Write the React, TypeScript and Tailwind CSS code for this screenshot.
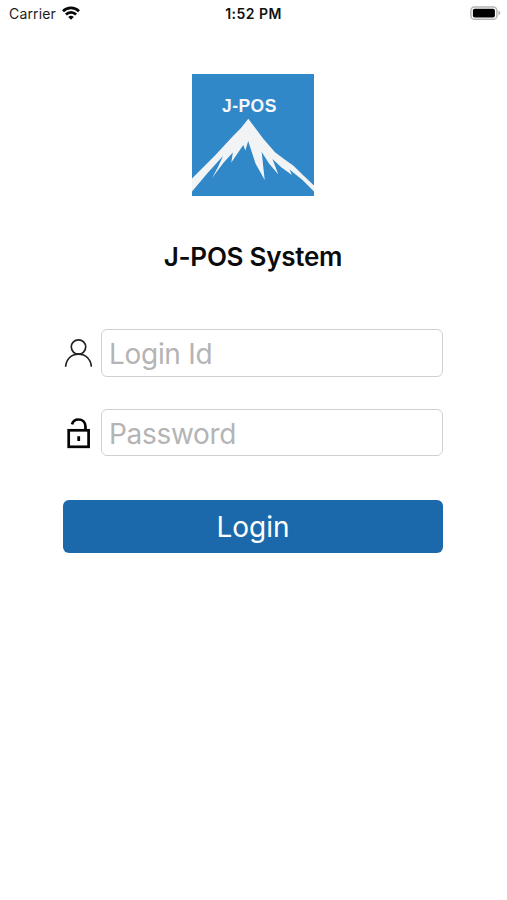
import type { ReactNode } from "react";

function StatusBar() {
  return (
    <header className="grid h-7 grid-cols-3 items-center pl-[9px] pr-[6px] text-[14px] leading-7 text-[#1c1c1c]">
      <div className="flex items-center gap-[6px]">
        <span className="tracking-[0.16px]">Carrier</span>
        <svg className="-mt-0.5" width="18" height="14" viewBox="0 0 18 14" fill="none" stroke="#080808" strokeWidth="2.7">
          <path d="M1 5.2a11.4 11.4 0 0 1 16 0" />
          <path d="M3.9 8.5a7.2 7.2 0 0 1 10.200 0" />
          <path d="M9 13.800 6.200 11a4 4 0 0 1 5.600 0Z" fill="#080808" stroke="none" />
        </svg>
      </div>
      <span className="-ml-[3px] text-center text-[14px] font-semibold tracking-[0.48px] text-[#111]">1:52 PM</span>
      <svg className="-mt-0.5 justify-self-end" width="31" height="16" viewBox="0 0 31 16">
        <rect x="0.9" y="1.9" width="26" height="12.4" rx="3.6" fill="#fff" stroke="#b5b5b5" strokeWidth="1.5" />
        <rect x="2.9" y="3.7" width="22" height="8.9" rx="1.8" fill="#000" />
        <path d="M28.4 5.6c2.5 1 2.5 4 0 5Z" fill="#b5b5b5" />
      </svg>
    </header>
  );
}

function Logo() {
  return (
    <div className="relative h-[122px] w-[122px] bg-[#3088c8]">
      <svg className="block" width="122" height="122" viewBox="0 0 122 122">
        <path
          fill="#f2f3f4"
          d="M56.300 44.800 64 55l7.500 10L83 78.300l9 6.700 9.500 6.700L112 102l10 9.500v6L110.500 106 97.500 95.500l2.500 5.500-10.500-7.500-9-8.500 5.800 15.500-9.300-11-7.300-11.500L72.700 106 63.500 89.500 56.200 67l-2.900 9.500-2-5.500-12 17.500 1.500-10-9.500 10.500L20 104l6-11 5-11-15 16.500L0 117.500v-13L23 81.500l18.300-19.800L49 54Z"
        />
      </svg>
      <span className="absolute left-[30px] top-[22px] font-['Liberation_Sans',Arial,sans-serif] text-[17.500px] font-bold leading-5 tracking-[0.45px] text-[#f6f8fc]">
        J-POS
      </span>
    </div>
  );
}

function UserIcon() {
  return (
    <svg width="28" height="30" viewBox="0 0 28 30" fill="none" stroke="#222" strokeWidth="1.700">
      <circle cx="14.500" cy="9" r="7.200" />
      <path d="M1.600 28.800C2.100 21.500 7 16.200 14.500 16.200s12.400 5.300 12.900 12.600" />
    </svg>
  );
}

function UnlockIcon() {
  return (
    <svg width="28" height="32" viewBox="0 0 28 32" fill="none" stroke="#050505" strokeWidth="2.700">
      <rect x="4.700" y="13.300" width="19.900" height="16.500" />
      <path d="M8 7.300C8.900 4.100 11.400 2.500 14.400 2.500c4.200 0 7.100 2.900 7.100 7.100v3.700" />
      <path d="M14.700 19.200v4.800" strokeWidth="2.800" />
    </svg>
  );
}

function Field({ icon, type, label, box }: { icon: ReactNode; type: string; label: string; box: string }) {
  return (
    <label className="flex items-center gap-[9px]">
      <span className="flex w-[29px] justify-center">{icon}</span>
      <input
        type={type}
        placeholder={label}
        className={`w-[342px] rounded-[6px] border-[1.500px] border-[#d0d0d0] bg-white px-[7px] pt-[2px] text-[28px] font-normal tracking-[-0.3px] text-black outline-none placeholder:text-[#b4b4b4] ${box}`}
      />
    </label>
  );
}

export default function App() {
  return (
    <div className="flex h-[900px] w-[507px] flex-col bg-white font-['Inter','Liberation_Sans',sans-serif]">
      <StatusBar />
      <main className="flex flex-col items-center pr-px pt-[46px]">
        <Logo />
        <h1 className="mt-[43px] text-[26px] font-semibold leading-9 tracking-[-0.25px] text-[#0b0b0b]">J-POS System</h1>
        <form className="mt-[54px] flex w-[380px] flex-col" onSubmit={(e) => e.preventDefault()}>
          <Field icon={<UserIcon />} type="text" label="Login Id" box="h-12" />
          <div className="h-8" />
          <Field icon={<UnlockIcon />} type="password" label="Password" box="h-[47px]" />
          <button className="mt-11 h-[53px] rounded-[6px] bg-[#1b69aa] pt-px text-[28px] font-normal text-white">Login</button>
        </form>
      </main>
    </div>
  );
}
